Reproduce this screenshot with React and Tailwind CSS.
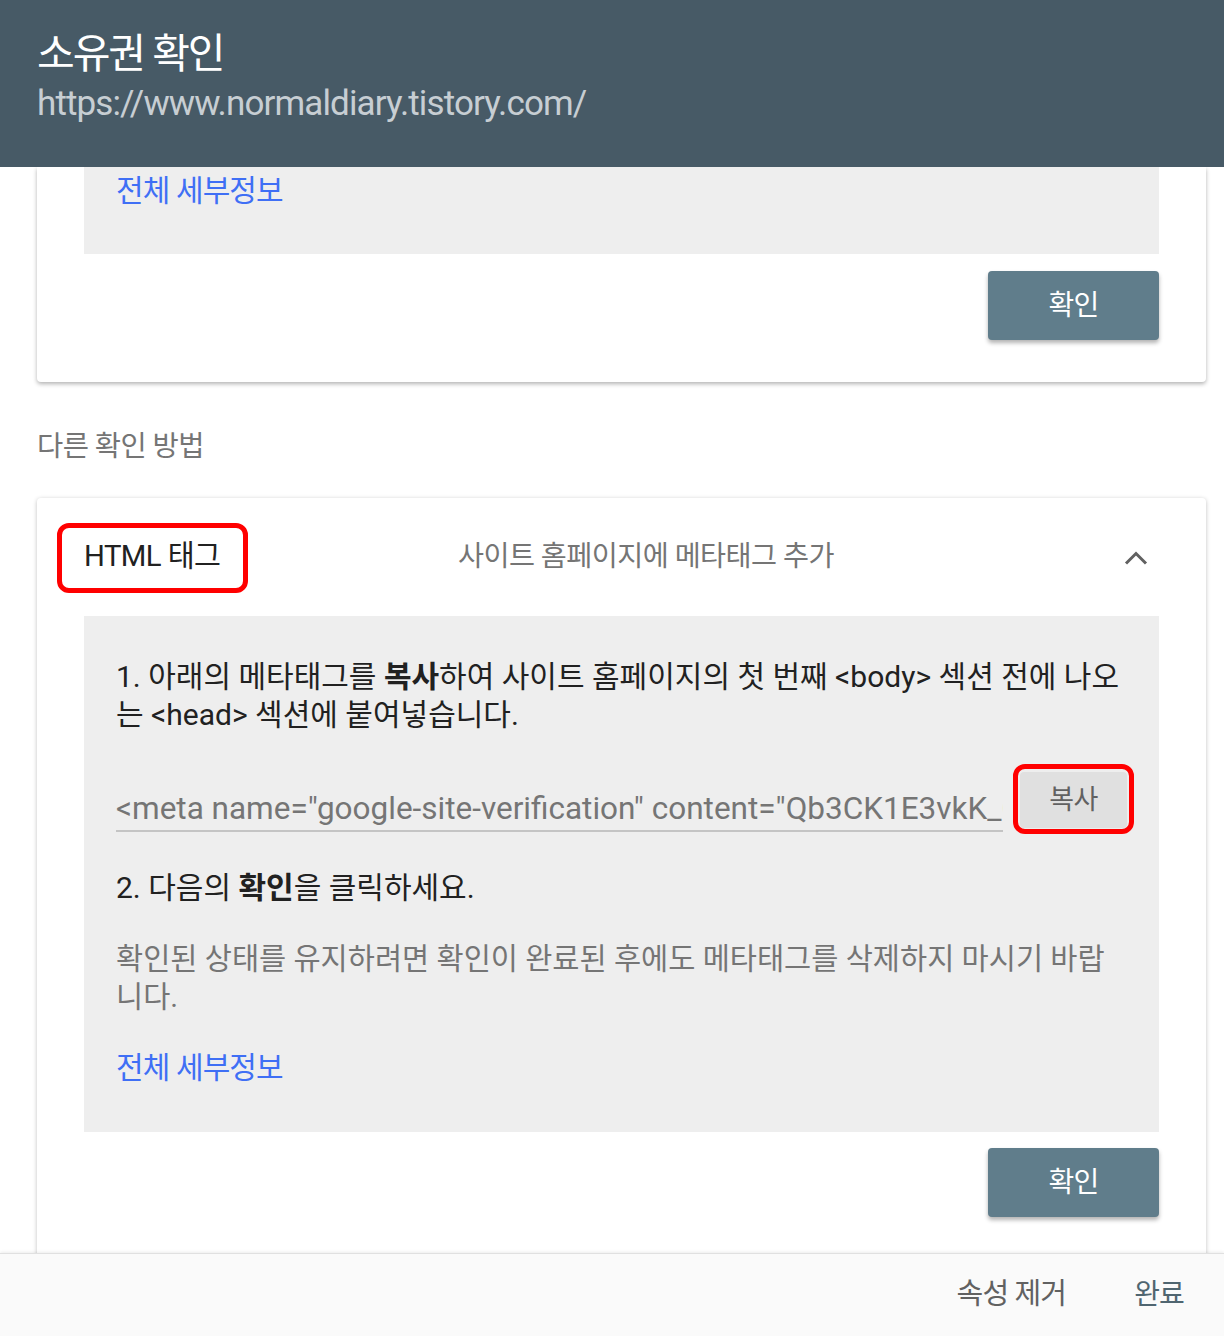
const font = { fontFamily: "Roboto, 'Noto Sans CJK KR', sans-serif" };

const ConfirmButton = () => (
  <div className="flex justify-end">
    <button className="w-[171px] h-[69px] rounded-[4px] bg-[#607d8b] text-white text-[28px] tracking-[-0.03em] shadow-[0_3px_4px_rgba(0,0,0,0.3)]">
      확인
    </button>
  </div>
);

const DetailsLink = () => (
  <a className="block text-[#3f6ff5] text-[30px] leading-[38px] tracking-[-0.03em]">
    전체 세부정보
  </a>
);

const App = () => {
  return (
    <div className="w-[1224px] h-[1336px] bg-white overflow-hidden flex flex-col" style={font}>
      {/* header */}
      <div className="h-[167px] shrink-0 bg-[#475a66] pl-[37px] pt-[28px] relative z-10">
        <h1 className="text-white text-[41px] leading-[52px] tracking-[-0.05em]">소유권 확인</h1>
        <p className="text-[#c7ced3] text-[35px] leading-[44px] tracking-[-0.025em] mt-[2px]">
          https://www.normaldiary.tistory.com/
        </p>
      </div>

      {/* scroll area */}
      <div className="flex-1 min-h-0 overflow-hidden">
        <div className="ml-[37px] mr-[18px] bg-white rounded-b-[4px] shadow-[0_2px_4px_rgba(0,0,0,0.3)] px-[47px] pb-[42px]">
          <div className="bg-[#eeeeee] px-[32px] pt-[5px] pb-[44px]">
            <DetailsLink />
          </div>
          <div className="mt-[17px]">
            <ConfirmButton />
          </div>
        </div>

        <p className="ml-[37px] mt-[49px] text-[#757575] text-[28.5px] leading-[32px] tracking-[-0.02em]">
          다른 확인 방법
        </p>

        <div className="ml-[37px] mr-[18px] mt-[35px] bg-white rounded-t-[4px] shadow-[0_1px_4px_rgba(0,0,0,0.25)] px-[47px] pb-[40px]">
          <div className="h-[118px] flex items-center">
            <div className="w-[374px] shrink-0">
              <div className="relative inline-flex items-center h-[38px]">
                <span className="text-[#212121] text-[29.3px] tracking-[-0.02em]">HTML 태그</span>
                <div className="absolute left-[-27px] top-[-15px] w-[191px] h-[70px] border-[5px] border-[#ff0000] rounded-[12px]" />
              </div>
            </div>
            <span className="flex-1 text-[#757575] text-[28.3px] tracking-[-0.02em]">
              사이트 홈페이지에 메타태그 추가
            </span>
            <svg width="24" height="14" viewBox="0 0 24 14" className="mr-[11px] mt-[1px]">
              <path d="M2 12.5 L12 2.5 L22 12.5" fill="none" stroke="#616161" strokeWidth="3" />
            </svg>
          </div>

          <div className="bg-[#eeeeee] pl-[32px] pr-[32px] pt-[42px] pb-[45px] text-[30px] leading-[38px]">
            <p className="text-[#212121]">
              1. 아래의 메타태그를 <b>복사</b>하여 사이트 홈페이지의 첫 번째 &lt;body&gt; 섹션 전에 나오는 &lt;head&gt; 섹션에 붙여넣습니다.
            </p>

            <div className="mt-[38px] flex items-end">
              <div className="flex-1 min-w-0 border-b-2 border-[#c4c4c4] mb-[-1px]">
                <p className="text-[#757575] text-[31.5px] leading-[40px] whitespace-nowrap overflow-hidden pb-[1px]">
                  &lt;meta name="google-site-verification" content="Qb3CK1E3vkK_CVdpG8rAa3kT2hR1xNqYlWm0" /&gt;
                </p>
              </div>
              <div className="relative ml-[17px] mb-[3px] shrink-0">
                <button className="w-[107px] h-[56px] rounded-[4px] bg-[#e0e0e0] text-[#616161] text-[27px] tracking-[-0.02em]">
                  복사
                </button>
                <div className="absolute left-[-7px] top-[-8px] w-[121px] h-[70px] border-[5px] border-[#ff0000] rounded-[12px]" />
              </div>
            </div>

            <p className="text-[#212121] mt-[38px]">
              2. 다음의 <b>확인</b>을 클릭하세요.
            </p>

            <p className="text-[#757575] text-[29.5px] mt-[33px] max-w-[1000px]">
              확인된 상태를 유지하려면 확인이 완료된 후에도 메타태그를 삭제하지 마시기 바랍니다.
            </p>

            <div className="mt-[33px]">
              <DetailsLink />
            </div>
          </div>

          <div className="mt-[16px]">
            <ConfirmButton />
          </div>
        </div>
      </div>

      {/* footer */}
      <div className="h-[83px] shrink-0 bg-[#fafafa] border-t border-[#e0e0e0] shadow-[0_-1px_3px_rgba(0,0,0,0.08)] flex items-center justify-end pr-[40px] gap-[68px] relative z-10">
        <button className="text-[#616161] text-[29px] tracking-[-0.03em]">속성 제거</button>
        <button className="text-[#4f6570] text-[28px] tracking-[-0.03em]">완료</button>
      </div>
    </div>
  );
};

export default App;
